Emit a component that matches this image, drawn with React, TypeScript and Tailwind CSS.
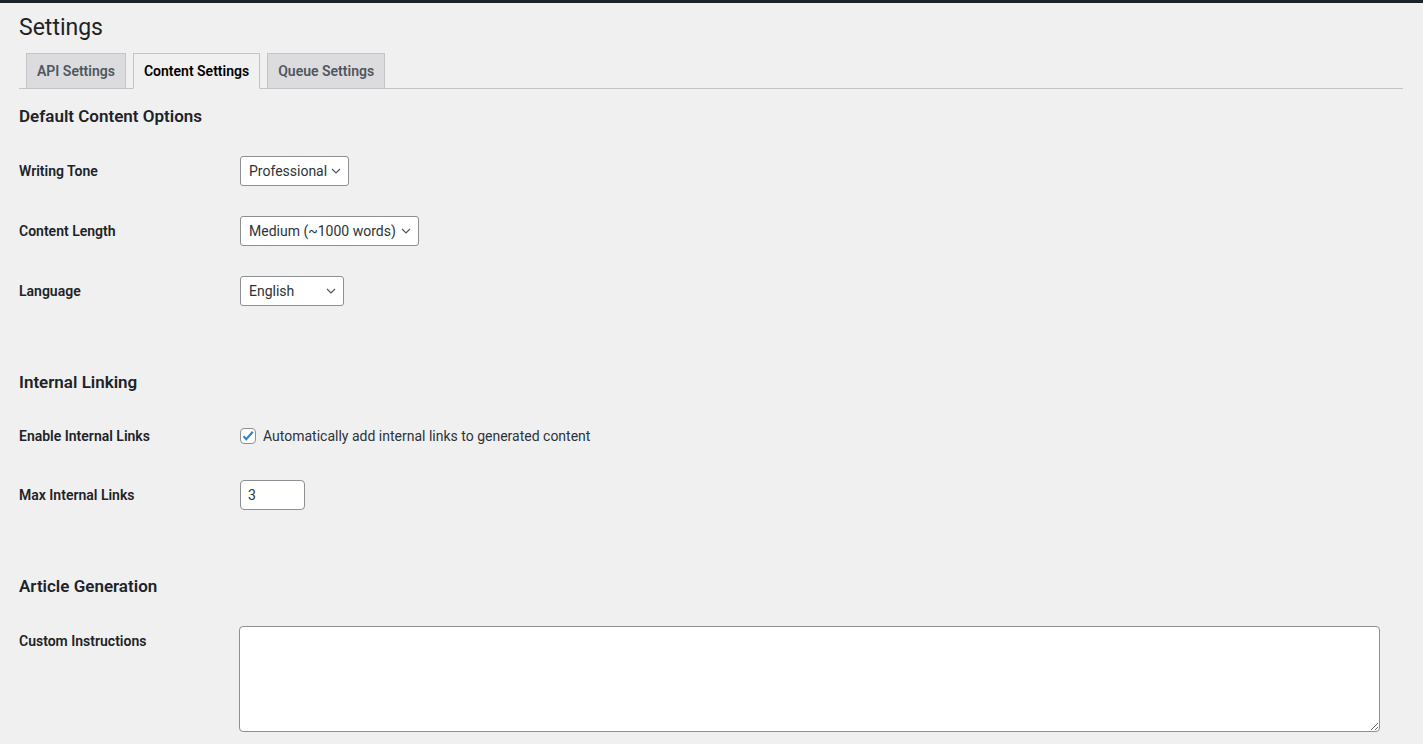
import React from "react";

const font = { fontFamily: "Roboto, 'Noto Sans', sans-serif" };

const Chevron = () => (
  <svg width="10" height="6" viewBox="0 0 10 6" className="shrink-0">
    <path d="M1 1l4 4 4-4" fill="none" stroke="#50575e" strokeWidth="1.2" />
  </svg>
);

const Select = ({ value, width }: { value: string; width: string }) => (
  <div
    className={`flex h-[30px] ${width} items-center justify-between rounded-[3px] border border-[#8c8f94] bg-white pl-2 pr-[7px] text-[14px] text-[#2c3338]`}
  >
    <span>{value}</span>
    <Chevron />
  </div>
);

const Row = ({ label, h, children, top }: { label: string; h: string; children: React.ReactNode; top?: boolean }) => (
  <div className={`flex ${h} ${top ? "items-start" : "items-center"}`}>
    <div className={`w-[221px] shrink-0 text-[14px] font-semibold text-[#1d2327] ${top ? "pt-[20px]" : ""}`}>{label}</div>
    <div className={top ? "flex-1 pt-[15px] pr-[22px]" : "flex items-center"}>{children}</div>
  </div>
);

const Heading = ({ children, mt }: { children: string; mt: string }) => (
  <h2 className={`${mt} mb-[14px] h-[22px] text-[17px] leading-[22px] font-semibold text-[#1d2327]`}>{children}</h2>
);

export default function App() {
  const tabs = ["API Settings", "Content Settings", "Queue Settings"];
  return (
    <div className="min-h-screen bg-[#f0f0f1]" style={font}>
      <div className="h-[3px] bg-[#1d2327]" />
      <div className="ml-[19px] mr-[20px]">
        <h1 className="pt-[10px] text-[23px] leading-[30px] font-normal text-[#1d2327]">Settings</h1>
        <div className="mt-[10px] flex gap-[7px] border-b border-[#c3c4c7] pl-[7px]">
          {tabs.map((t) =>
            t === "Content Settings" ? (
              <div
                key={t}
                className="-mb-px flex h-[36px] items-center border border-[#c3c4c7] border-b-[#f0f0f1] bg-[#f0f0f1] px-[10px] pt-px text-[14px] font-semibold text-black"
              >
                {t}
              </div>
            ) : (
              <div
                key={t}
                className="flex h-[35px] items-center border border-b-0 border-[#c3c4c7] bg-[#dcdcde] px-[10px] pt-px text-[14px] font-semibold text-[#50575e]"
              >
                {t}
              </div>
            )
          )}
        </div>

        <Heading mt="mt-[16px]">Default Content Options</Heading>
        <Row label="Writing Tone" h="h-[60px]">
          <Select value="Professional" width="w-[109px]" />
        </Row>
        <Row label="Content Length" h="h-[60px]">
          <Select value="Medium (~1000 words)" width="w-[179px]" />
        </Row>
        <Row label="Language" h="h-[60px]">
          <Select value="English" width="w-[104px]" />
        </Row>

        <Heading mt="mt-[50px]">Internal Linking</Heading>
        <Row label="Enable Internal Links" h="h-[58px]">
          <label className="flex items-center gap-[7px] text-[14px] text-[#2c3338]">
            <span className="flex h-4 w-4 items-center justify-center rounded-[4px] border border-[#8c8f94] bg-white">
              <svg width="14" height="14" viewBox="0 0 14 14">
                <path d="M2.5 7.2l2.8 3L11.8 2.8" fill="none" stroke="#3582c4" strokeWidth="2.2" />
              </svg>
            </span>
            Automatically add internal links to generated content
          </label>
        </Row>
        <Row label="Max Internal Links" h="h-[60px]">
          <div className="flex h-[30px] w-[65px] items-center rounded-[4px] border border-[#8c8f94] bg-white px-[7px] text-[14px] text-[#2c3338]">
            3
          </div>
        </Row>

        <Heading mt="mt-[50px]">Article Generation</Heading>
        <Row label="Custom Instructions" h="h-[133px]" top>
          <textarea
            className="-ml-px block h-[106px] w-full rounded-[4px] border border-[#8c8f94] bg-white outline-none"
            defaultValue=""
          />
        </Row>
      </div>
    </div>
  );
}
